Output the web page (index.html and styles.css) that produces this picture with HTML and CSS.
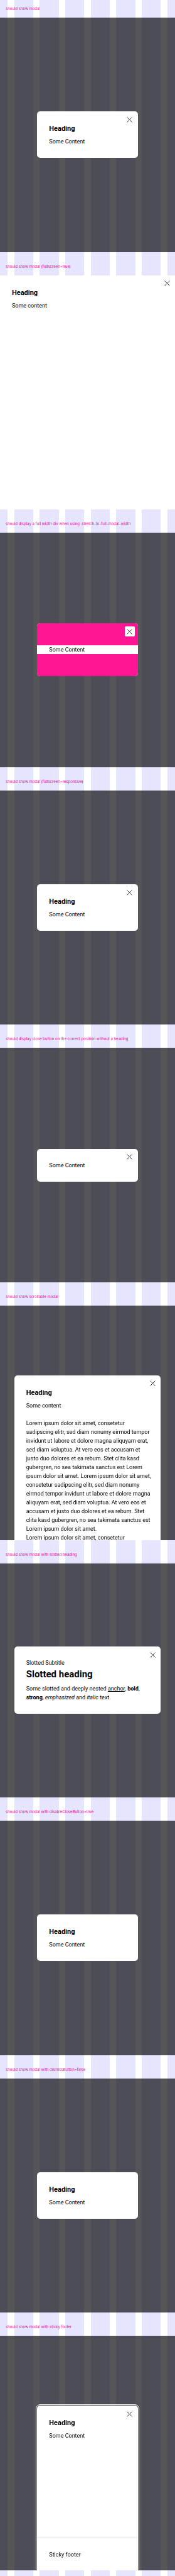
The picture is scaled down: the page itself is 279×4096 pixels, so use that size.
FILE: index.html
```html
<!DOCTYPE html>
<html lang="en">
<head>
<meta charset="utf-8">
<meta name="viewport" content="width=device-width, initial-scale=1">
<title>Modal overview</title>
<link rel="stylesheet" href="styles.css">
</head>
<body>
<svg class="sprite" aria-hidden="true">
  <symbol id="icon-close" viewBox="0 0 16 16"><path d="M1 1L15 15M15 1L1 15" fill="none" stroke="currentColor" stroke-width="1.4"/></symbol>
</svg>
<main class="playground">
  <section class="case">
    <p class="case-label">should show modal</p>
    <div class="stage">
      <div class="modal" role="dialog" aria-label="Heading">
        <button class="close" type="button" aria-label="Close modal"><svg class="icon"><use href="#icon-close"/></svg></button>
        <h2 class="heading">Heading</h2>
        <p class="text">Some Content</p>
      </div>
    </div>
  </section>

  <section class="case">
    <p class="case-label">should show modal (fullscreen=true)</p>
    <div class="stage">
      <div class="modal modal-fullscreen" role="dialog" aria-label="Heading">
        <button class="close" type="button" aria-label="Close modal"><svg class="icon"><use href="#icon-close"/></svg></button>
        <h2 class="heading">Heading</h2>
        <p class="text">Some content</p>
      </div>
    </div>
  </section>

  <section class="case">
    <p class="case-label">should display a full width div when using .stretch-to-full-modal-width</p>
    <div class="stage">
      <div class="modal modal-stretch" role="dialog" aria-label="Full width content">
        <button class="close" type="button" aria-label="Close modal"><svg class="icon"><use href="#icon-close"/></svg></button>
        <div class="band"></div>
        <p class="text">Some Content</p>
        <div class="band"></div>
      </div>
    </div>
  </section>

  <section class="case">
    <p class="case-label">should show modal (fullscreen=responsive)</p>
    <div class="stage">
      <div class="modal" role="dialog" aria-label="Heading">
        <button class="close" type="button" aria-label="Close modal"><svg class="icon"><use href="#icon-close"/></svg></button>
        <h2 class="heading">Heading</h2>
        <p class="text">Some Content</p>
      </div>
    </div>
  </section>

  <section class="case">
    <p class="case-label">should display close button on the correct position without a heading</p>
    <div class="stage">
      <div class="modal" role="dialog" aria-label="No heading">
        <button class="close" type="button" aria-label="Close modal"><svg class="icon"><use href="#icon-close"/></svg></button>
        <p class="text">Some Content</p>
      </div>
    </div>
  </section>

  <section class="case">
    <p class="case-label">should show scrollable modal</p>
    <div class="stage stage-top">
      <div class="modal modal-wide modal-long" role="dialog" aria-label="Heading">
        <button class="close" type="button" aria-label="Close modal"><svg class="icon"><use href="#icon-close"/></svg></button>
        <h2 class="heading">Heading</h2>
        <p class="text text-lines">Some content<br><br>Lorem ipsum dolor sit amet, consetetur<br>sadipscing elitr, sed diam nonumy eirmod tempor<br>invidunt ut labore et dolore magna aliquyam erat,<br>sed diam voluptua. At vero eos et accusam et<br>justo duo dolores et ea rebum. Stet clita kasd<br>gubergren, no sea takimata sanctus est Lorem<br>ipsum dolor sit amet. Lorem ipsum dolor sit amet,<br>consetetur sadipscing elitr, sed diam nonumy<br>eirmod tempor invidunt ut labore et dolore magna<br>aliquyam erat, sed diam voluptua. At vero eos et<br>accusam et justo duo dolores et ea rebum. Stet<br>clita kasd gubergren, no sea takimata sanctus est<br>Lorem ipsum dolor sit amet.<br>Lorem ipsum dolor sit amet, consetetur</p>
      </div>
    </div>
  </section>

  <section class="case">
    <p class="case-label">should show modal with slotted heading</p>
    <div class="stage">
      <div class="modal modal-wide" role="dialog" aria-label="Slotted heading">
        <button class="close" type="button" aria-label="Close modal"><svg class="icon"><use href="#icon-close"/></svg></button>
        <p class="text">Slotted Subtitle</p>
        <h2 class="heading heading-large">Slotted heading</h2>
        <p class="text text-lines">Some slotted and deeply nested <a class="anchor" href="#">anchor</a>, <b>bold</b>,<br><strong>strong</strong>, <em>emphasized</em> and <i>italic</i> text.</p>
      </div>
    </div>
  </section>

  <section class="case">
    <p class="case-label">should show modal with disableCloseButton=true</p>
    <div class="stage">
      <div class="modal" role="dialog" aria-label="Heading">
        <h2 class="heading">Heading</h2>
        <p class="text">Some Content</p>
      </div>
    </div>
  </section>

  <section class="case">
    <p class="case-label">should show modal with dismissButton=false</p>
    <div class="stage">
      <div class="modal" role="dialog" aria-label="Heading">
        <h2 class="heading">Heading</h2>
        <p class="text">Some Content</p>
      </div>
    </div>
  </section>

  <section class="case">
    <p class="case-label">should show modal with sticky footer</p>
    <div class="stage stage-top">
      <div class="modal modal-long modal-footer" role="dialog" aria-label="Heading">
        <button class="close" type="button" aria-label="Close modal"><svg class="icon"><use href="#icon-close"/></svg></button>
        <div class="modal-body">
          <h2 class="heading">Heading</h2>
          <p class="text">Some Content</p>
        </div>
        <footer class="footer text">Sticky footer</footer>
      </div>
    </div>
  </section>
</main>
</body>
</html>
```

FILE: styles.css
```css
* {
  box-sizing: border-box;
}

body {
  margin: 0;
  color: #010205;
  font-family: Roboto, "Liberation Sans", sans-serif;
  /* 52-wide columns with 18-wide gutters on a 480 grid */
  background: repeating-linear-gradient(
    90deg,
    #e5e5ff 0 calc(100% * 21 / 480),
    #fff calc(100% * 21 / 480) calc(100% * 39 / 480),
    #e5e5ff calc(100% * 39 / 480) calc(100% * 70 / 480)
  );
}

.sprite {
  display: none;
}

.playground {
  display: flex;
  flex-direction: column;
  min-height: 100vh;
}

.case {
  display: flex;
  flex: 1 0 0;
  flex-direction: column;
  padding-bottom: 9px;
}

.case-label {
  margin: 0;
  padding: 9px 9px 10px;
  color: #ff1493;
  font-family: Inter, Roboto, sans-serif;
  font-size: 6px;
  line-height: 9px;
  white-space: nowrap;
  mix-blend-mode: multiply;
}

.stage {
  display: flex;
  flex: 1 0 0;
  align-items: center;
  justify-content: center;
  min-height: 372px;
  overflow: hidden;
  background: rgba(1, 2, 5, 0.67);
}

.stage-top {
  align-items: stretch;
  height: 372px;
  padding-top: 111px;
}

.modal {
  position: relative;
  width: 57.5%;
  padding: 19px;
  border-radius: 5px;
  background: #fff;
}

.modal-wide {
  width: 83.75%;
}

.modal-fullscreen {
  align-self: stretch;
  width: 100%;
  border-radius: 0;
}

.modal-long {
  border-radius: 5px 5px 0 0;
}

.modal-stretch {
  padding: 0;
  overflow: hidden;
}

.modal-stretch .text {
  padding: 0 19px;
}

.band {
  height: 35px;
  background: #ff1493;
}

.close {
  position: absolute;
  top: 5px;
  right: 5px;
  display: grid;
  place-items: center;
  width: 16px;
  height: 16px;
  padding: 0;
  border: 0;
  border-radius: 2px;
  background: #fff;
  color: #010205;
}

.icon {
  width: 9px;
  height: 9px;
}

.heading {
  margin: 0 0 5px;
  font-size: 11px;
  font-weight: 700;
  line-height: 17px;
}

.heading-large {
  font-size: 15px;
  line-height: 22px;
}

.text {
  margin: 0;
  font-size: 9px;
  line-height: 14px;
}

.text-lines {
  white-space: nowrap;
}

.anchor {
  color: inherit;
  text-decoration: underline;
}

.modal-footer {
  display: flex;
  flex-direction: column;
  padding: 0;
  overflow: hidden;
  outline: 1px solid #fff;
  outline-offset: 1px;
}

.modal-body {
  flex: 1;
  padding: 19px;
}

.footer {
  padding: 19px 19px 18px;
  background: #fff;
  box-shadow: 0 -1px 4px rgba(0, 0, 0, 0.12);
}
```
